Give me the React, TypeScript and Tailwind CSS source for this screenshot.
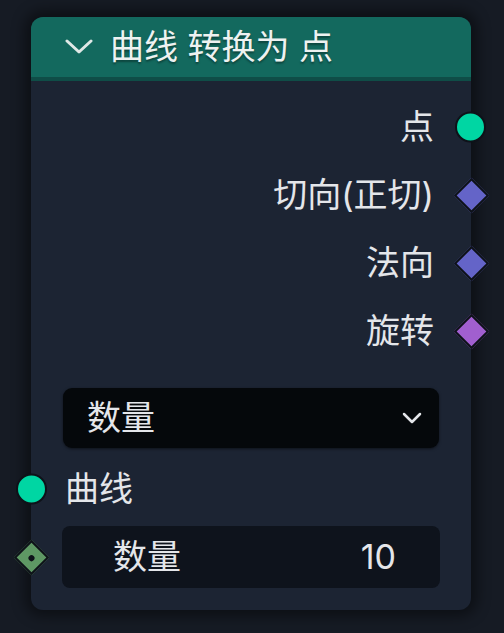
import React from 'react';

const FONT = { fontFamily: 'Inter, "Noto Sans CJK SC", sans-serif' };

function Circle({ side }: { side: 'left' | 'right' }) {
  return (
    <div
      className={`absolute top-1/2 -translate-y-1/2 w-[31px] h-[31px] rounded-full bg-[#00d6a3] border-[2.5px] border-[#0e1219] ${
        side === 'right' ? 'right-[-15px]' : 'left-[-15px]'
      }`}
    />
  );
}

function Diamond({ side, color, dot }: { side: 'left' | 'right'; color: string; dot?: boolean }) {
  return (
    <div
      className={`absolute top-1/2 -translate-y-1/2 w-[36px] h-[36px] flex items-center justify-center ${
        side === 'right' ? 'right-[-18px]' : 'left-[-18px]'
      }`}
    >
      <div
        className="w-[25px] h-[25px] rotate-45 border-[2.5px] border-[#0e1219] flex items-center justify-center"
        style={{ backgroundColor: color }}
      >
        {dot && <div className="w-[6px] h-[6px] rounded-full bg-[#0e1219]" />}
      </div>
    </div>
  );
}

function OutputRow({ label, socket }: { label: string; socket: React.ReactNode }) {
  return (
    <div className="relative h-[68px] flex items-center justify-end pr-[37px]">
      <span className="text-[34px] text-[#e4e6ea] leading-none">{label}</span>
      {socket}
    </div>
  );
}

export default function App() {
  return (
    <div className="w-[504px] h-[633px] bg-[#161b24] pt-[17px] pl-[31px]" style={FONT}>
      <div className="w-[440px] rounded-[12px] bg-[#1c2433] shadow-[0_0_14px_6px_rgba(0,0,0,0.45)] flex flex-col">
        <div className="h-[64px] rounded-t-[12px] bg-[#13695e] border-b-[4px] border-[#0f4d47] flex items-center">
          <svg width="28" height="16" viewBox="0 0 28 16" className="ml-[34px]">
            <path d="M2 2 L14 13 L26 2" fill="none" stroke="#dfe8e6" strokeWidth="3" strokeLinecap="round" strokeLinejoin="round" />
          </svg>
          <span className="ml-[17px] text-[34px] text-[#eef2f1] leading-none [text-shadow:0_2px_2px_rgba(0,0,0,0.35)]">
            曲线 转换为 点
          </span>
        </div>

        <div className="pt-[12px] pb-[22px]">
          <OutputRow label="点" socket={<Circle side="right" />} />
          <OutputRow label="切向(正切)" socket={<Diamond side="right" color="#6464c8" />} />
          <OutputRow label="法向" socket={<Diamond side="right" color="#6464c8" />} />
          <OutputRow label="旋转" socket={<Diamond side="right" color="#a15fcf" />} />

          <div className="mx-[32px] mt-[23px] h-[60px] rounded-[9px] bg-[#05080b] shadow-[0_1px_3px_rgba(0,0,0,0.5)] flex items-center justify-between pl-[24px] pr-[17px]">
            <span className="text-[34px] text-[#e4e6ea] leading-none">数量</span>
            <svg width="20" height="12" viewBox="0 0 20 12">
              <path d="M2 2 L10 10 L18 2" fill="none" stroke="#e4e6ea" strokeWidth="2.5" strokeLinecap="round" strokeLinejoin="round" />
            </svg>
          </div>

          <div className="relative mt-[7px] h-[68px] flex items-center pl-[34px]">
            <Circle side="left" />
            <span className="text-[34px] text-[#e4e6ea] leading-none">曲线</span>
          </div>

          <div className="relative mt-[3px] h-[62px]">
            <Diamond side="left" color="#5e9864" dot />
            <div className="mx-[31px] h-full rounded-[8px] bg-[#0e131c] flex items-center justify-between pl-[51px] pr-[44px]">
              <span className="text-[34px] text-[#e4e6ea] leading-none">数量</span>
              <span className="text-[34px] text-[#e4e6ea] leading-none">10</span>
            </div>
          </div>
        </div>
      </div>
    </div>
  );
}
